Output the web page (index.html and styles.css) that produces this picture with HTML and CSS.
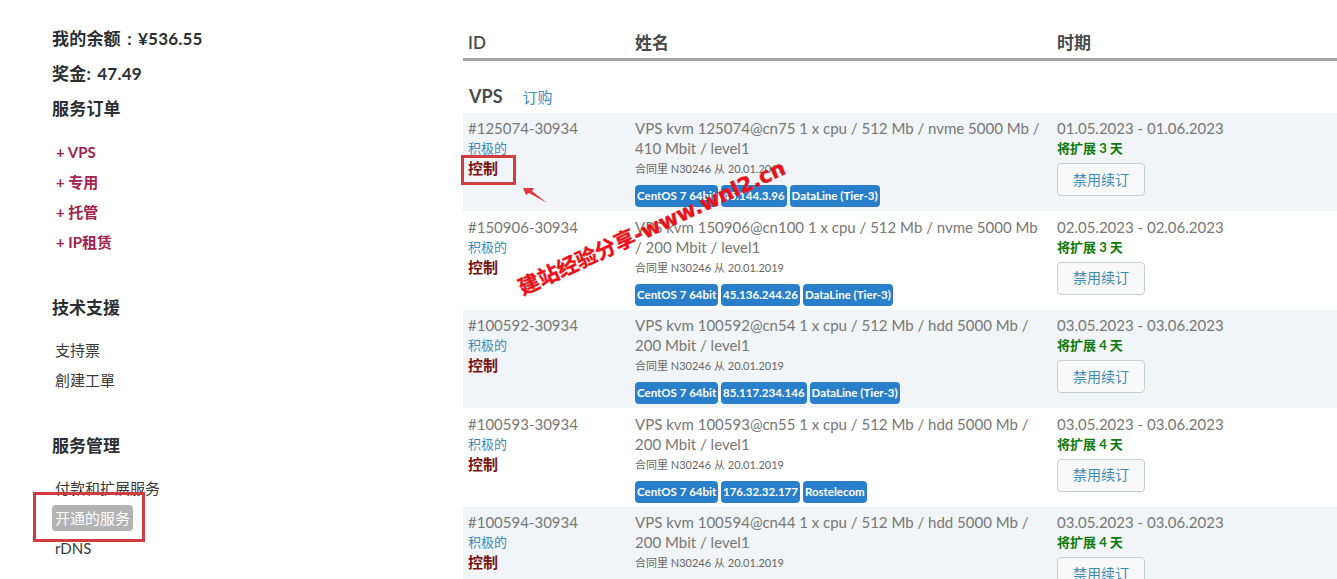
FILE: index.html
```html
<!DOCTYPE html>
<html lang="zh">
<head>
<meta charset="utf-8">
<title>服务</title>
<link rel="stylesheet" href="styles.css">
</head>
<body>
<div class="page">
  <aside class="side">
    <div class="bal">我的余额 : ¥536.55</div>
    <div class="bal">奖金: 47.49</div>
    <div class="bal">服务订单</div>
    <ul class="menu order">
      <li>+ VPS</li><li>+ 专用</li><li>+ 托管</li><li>+ IP租赁</li>
    </ul>
    <div class="head">技术支援</div>
    <ul class="menu">
      <li>支持票</li><li>創建工單</li>
    </ul>
    <div class="head">服务管理</div>
    <ul class="menu">
      <li>付款和扩展服务</li><li><span class="current">开通的服务</span></li><li>rDNS</li>
    </ul>
  </aside>
  <main class="main">
    <div class="thead"><span>ID</span><span>姓名</span><span>时期</span></div>
    <div class="group"><b>VPS</b><a>订购</a></div>

    <div class="row">
      <div><div>#125074-30934</div><div class="state">积极的</div><div class="ctl">控制</div></div>
      <div><div class="title">VPS kvm 125074@cn75 1 x cpu / 512 Mb / nvme 5000 Mb / 410 Mbit / level1</div><div class="contract">合同里 N30246 从 20.01.2019</div>
        <div class="tags"><span class="tag w83">CentOS 7 64bit</span><span class="tag">45.144.3.96</span><span class="tag">DataLine (Tier-3)</span></div></div>
      <div><div>01.05.2023 - 01.06.2023</div><div class="ext">将扩展 3 天</div><button class="btn">禁用续订</button></div>
    </div>
    <div class="row">
      <div><div>#150906-30934</div><div class="state">积极的</div><div class="ctl">控制</div></div>
      <div><div class="title">VPS kvm 150906@cn100 1 x cpu / 512 Mb / nvme 5000 Mb / 200 Mbit / level1</div><div class="contract">合同里 N30246 从 20.01.2019</div>
        <div class="tags"><span class="tag w83">CentOS 7 64bit</span><span class="tag">45.136.244.26</span><span class="tag">DataLine (Tier-3)</span></div></div>
      <div><div>02.05.2023 - 02.06.2023</div><div class="ext">将扩展 3 天</div><button class="btn">禁用续订</button></div>
    </div>
    <div class="row">
      <div><div>#100592-30934</div><div class="state">积极的</div><div class="ctl">控制</div></div>
      <div><div class="title">VPS kvm 100592@cn54 1 x cpu / 512 Mb / hdd 5000 Mb / 200 Mbit / level1</div><div class="contract">合同里 N30246 从 20.01.2019</div>
        <div class="tags"><span class="tag w83">CentOS 7 64bit</span><span class="tag">85.117.234.146</span><span class="tag">DataLine (Tier-3)</span></div></div>
      <div><div>03.05.2023 - 03.06.2023</div><div class="ext">将扩展 4 天</div><button class="btn">禁用续订</button></div>
    </div>
    <div class="row">
      <div><div>#100593-30934</div><div class="state">积极的</div><div class="ctl">控制</div></div>
      <div><div class="title">VPS kvm 100593@cn55 1 x cpu / 512 Mb / hdd 5000 Mb / 200 Mbit / level1</div><div class="contract">合同里 N30246 从 20.01.2019</div>
        <div class="tags"><span class="tag w83">CentOS 7 64bit</span><span class="tag">176.32.32.177</span><span class="tag">Rostelecom</span></div></div>
      <div><div>03.05.2023 - 03.06.2023</div><div class="ext">将扩展 4 天</div><button class="btn">禁用续订</button></div>
    </div>
    <div class="row">
      <div><div>#100594-30934</div><div class="state">积极的</div><div class="ctl">控制</div></div>
      <div><div class="title">VPS kvm 100594@cn44 1 x cpu / 512 Mb / hdd 5000 Mb / 200 Mbit / level1</div><div class="contract">合同里 N30246 从 20.01.2019</div></div>
      <div><div>03.05.2023 - 03.06.2023</div><div class="ext">将扩展 4 天</div><button class="btn">禁用续订</button></div>
    </div>
  </main>
  <div class="mark mark-ctl"></div>
  <div class="mark mark-side"></div>
  <svg class="arrow" width="30" height="22" viewBox="0 0 30 22"><polygon points="1,2 12,2 10,5 25,17 7,7 4,9" fill="#e0383c"/></svg>
  <div class="water">建站经验分享-www.wnl2.cn</div>
</div>
</body>
</html>
```
FILE: styles.css
```css
* { box-sizing: border-box; }
html, body { margin: 0; padding: 0; background: #fff; }
body { font-family: Lato, "Noto Sans CJK SC", sans-serif; color: #777; font-size: 15px; }
.page { position: relative; display: flex; width: 1337px; height: 579px; overflow: hidden; }

.side { width: 463px; flex: none; padding: 21px 0 0 52px; color: #2b2f33; }
.bal { font-weight: 700; font-size: 17px; line-height: 35px; height: 35px; word-spacing: 2px; letter-spacing: .2px; }
.head { font-weight: 700; font-size: 17px; line-height: 24px; }
.menu { list-style: none; margin: 0; padding: 0 0 0 3px; color: #3a3a3a; }
.menu li { line-height: 30px; height: 30px; }
.menu + .head { margin-top: 39px; }
.head + .menu { margin-top: 15px; }
.bal + .menu { margin-top: 11px; }
.order { padding-left: 4px; color: #a3224f; font-weight: 700; }
.order + .head { margin-top: 39px; }
.current { display: inline-block; margin-left: -3px; padding: 0 3px; height: 26px; line-height: 26px; color: #fff; background: #b3b3b3; border-radius: 4px; }

.main { flex: 1; }
.thead { display: grid; grid-template-columns: 166px 423px 1fr; height: 61px; padding-top: 31px; border-bottom: 3px solid #a5a5a5; font-size: 17px; font-weight: 600; line-height: 24px; color: #4a4a4a; }
.thead span { padding-left: 5px; }
.thead span:nth-child(2) { padding-left: 6px; }
.group { height: 51.5px; padding: 23px 0 0 6px; line-height: 24px; color: #4a4a4a; display: flex; align-items: baseline; gap: 20px; }
.group b { font-size: 18px; }
.group a { color: #3a8bbb; font-size: 15px; }

.row { display: grid; grid-template-columns: 166px 423px 1fr; height: 98.5px; padding-top: 5.5px; line-height: 20px; }
.row:nth-of-type(odd) { background: #f1f5f8; }
.row > div { padding: 0 5px; }
.row > div:nth-child(2) { padding-left: 6px; }
.state { color: #3a8bbb; font-size: 13px; }
.ctl { color: #7a1010; font-weight: 700; font-size: 15px; }
.title { font-size: 15px; }
.contract { font-size: 11px; line-height: 22px; color: #666; }
.tags { display: flex; gap: 3px; margin-top: 5px; }
.tag { height: 22px; line-height: 22px; padding: 0 2px; background: #2a7fcb; color: #fff; font-size: 11.5px; font-weight: 700; border-radius: 4px; white-space: nowrap; }
.w83 { width: 83px; overflow: hidden; }
.ext { color: #0c7a0c; font-size: 13px; font-weight: 700; }
.btn { display: block; width: 88px; height: 33px; margin-top: 5px; padding: 0 0 2px; border: 1px solid #c8cdd0; border-radius: 4px; background: #f9f9f9; color: #3b8cb5; font: 14px Lato, "Noto Sans CJK SC", sans-serif; }

.mark { position: absolute; border: 3px solid #d03c40; }
.mark-ctl { left: 461px; top: 155px; width: 55px; height: 30px; }
.mark-side { left: 33px; top: 492px; width: 112px; height: 50px; }
.arrow { position: absolute; left: 522px; top: 186px; }
.water { position: absolute; left: 502px; top: 213px; width: 300px; font-family: "DejaVu Sans", "Noto Sans CJK SC", sans-serif; font-size: 21px; line-height: 30px; font-weight: 700; text-align: center; color: #e8131a; -webkit-text-stroke: .4px #e8131a; white-space: nowrap; transform: rotate(-24.8deg); }
```
